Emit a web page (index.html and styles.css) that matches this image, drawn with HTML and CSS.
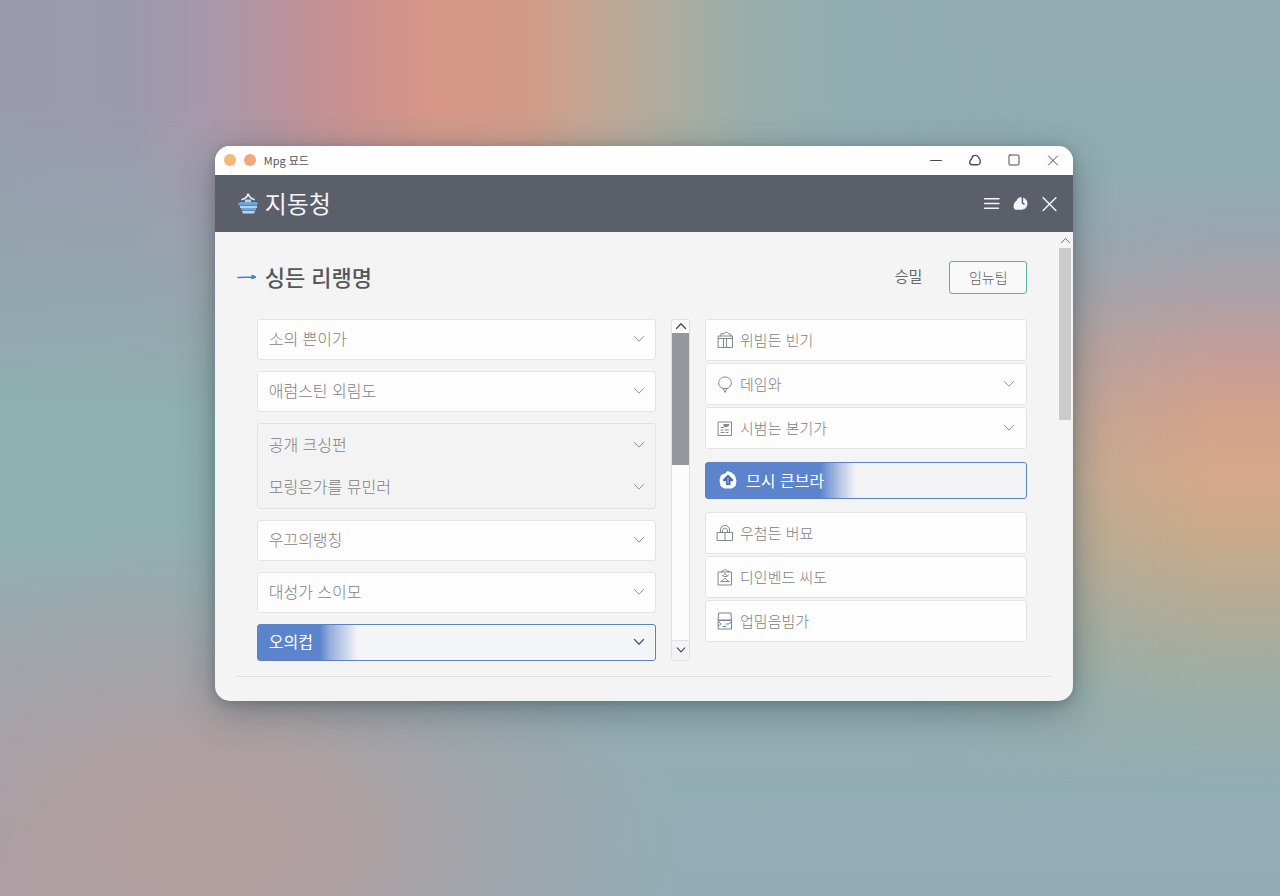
FILE: index.html
```html
<!DOCTYPE html>
<html lang="ko">
<head>
<meta charset="utf-8">
<meta name="viewport" content="width=device-width, initial-scale=1">
<title>Mpg 묘드</title>
<link rel="stylesheet" href="styles.css">
</head>
<body>
<svg class="sprite" aria-hidden="true">
  <symbol id="chevron" viewBox="0 0 12 12"><path d="M1.5 3.5 6 8.2l4.500-4.700"/></symbol>
  <symbol id="chevron-up" viewBox="0 0 12 12"><path d="M1.500 8.500 6 3.800l4.500 4.700"/></symbol>
</svg>
<main class="window">
  <div class="titlebar">
    <span class="dot dot-amber"></span>
    <span class="dot dot-orange"></span>
    <span class="titlebar-name">Mpg 묘드</span>
    <div class="window-controls">
      <button type="button" aria-label="최소화"><svg viewBox="0 0 14 14"><path d="M1.500 7.500h11"/></svg></button>
      <button type="button" aria-label="고정"><svg viewBox="0 0 14 14"><path class="bold" d="M5 3c2-.9 4.300-.6 5.300 1 .5 1 1.900 2.300 2 4.200.1 2.400-1 3.500-3 3.500H4.300c-1.900 0-2.700-1-2.600-2.700C1.800 6.900 3.600 6.600 4 5c.2-.9.400-1.700 1-2Z"/></svg></button>
      <button type="button" aria-label="최대화"><svg viewBox="0 0 14 14"><rect x="2" y="2" width="10" height="10" rx="1"/></svg></button>
      <button type="button" aria-label="닫기"><svg viewBox="0 0 14 14"><path d="m2.500 3 9 9M11.500 3l-9 9"/></svg></button>
    </div>
  </div>

  <header class="appbar">
    <svg class="logo" viewBox="0 0 22 24" aria-hidden="true">
      <path class="logo-roof" d="M5 8.500c3-.5 5-2 6-5.500 1 2.500 3 4.500 6 5.500"/>
      <path class="logo-light" d="M8 8.500h6v3H8z"/>
      <path class="logo-band" d="M1 12.500 4 11h15l2 1-1 2.500H1.500z"/>
      <path class="logo-light" d="M3 15h17v2H3z"/>
      <path class="logo-band" d="M4 17h15v2.500H5z"/>
      <path class="logo-light" d="M5 20h13l-1 2.500H6z"/>
    </svg>
    <h1>지동청</h1>
    <div class="appbar-actions">
      <button type="button" aria-label="메뉴"><svg viewBox="0 0 16 16"><path d="M1.500 3.500h13.500M1.500 8h13.500M1.500 12.500h13"/></svg></button>
      <button type="button" aria-label="알림"><svg viewBox="0 0 16 16"><path class="solid" d="M1.500 10.500c0-2 .8-3.500 2.500-4.800C5 3.500 6.500 2 8.500 2.200c3.700.2 6 2.600 6 5.800 0 2.500-1.200 4.800-3.500 5.300-2.500.6-5 .7-7.500.5-1.500-.2-2-1.600-2-3.300Z"/><path class="notch" d="M9.800 2v5.500l1.500 1"/></svg></button>
      <button type="button" aria-label="닫기"><svg viewBox="0 0 16 16"><path d="m2 2.500 12 12M14 2.500l-12 12"/></svg></button>
    </div>
  </header>

  <div class="body">
    <section class="content">
      <div class="heading">
        <svg class="arrow" viewBox="0 0 20 8" aria-hidden="true"><path d="M1 4.500 18 4M15 2.500l3.500 1.500L15 5.500"/></svg>
        <h2>싱든 리랭명</h2>
        <a class="link" href="#">승밀</a>
        <button type="button" class="outline">임뉴팁</button>
      </div>

      <div class="panels">
        <div class="options">
          <div class="field"><select aria-label="소의 쁜이가"><option>소의 쁜이가</option></select><svg><use href="#chevron"/></svg></div>
          <div class="field"><select aria-label="애럼스틴 외림도"><option>애럼스틴 외림도</option></select><svg><use href="#chevron"/></svg></div>
          <div class="pair">
            <div class="field"><select aria-label="공개 크싱펀"><option>공개 크싱펀</option></select><svg><use href="#chevron"/></svg></div>
            <div class="field"><select aria-label="모링은가를 뮤민러"><option>모링은가를 뮤민러</option></select><svg><use href="#chevron"/></svg></div>
          </div>
          <div class="field"><select aria-label="우끄의랭칭"><option>우끄의랭칭</option></select><svg><use href="#chevron"/></svg></div>
          <div class="field"><select aria-label="대성가 스이모"><option>대성가 스이모</option></select><svg><use href="#chevron"/></svg></div>
          <div class="field active"><select aria-label="오의컵"><option>오의컵</option></select><svg><use href="#chevron"/></svg></div>
        </div>

        <div class="scrollbar">
          <button type="button" class="scroll-up" aria-label="위로"><svg><use href="#chevron-up"/></svg></button>
          <div class="track"><div class="thumb"></div></div>
          <button type="button" class="scroll-down" aria-label="아래로"><svg><use href="#chevron"/></svg></button>
        </div>

        <div class="side">
          <div class="side-group">
            <button type="button" class="item">
              <svg class="icon" viewBox="0 0 18 20"><path d="M2.500 6h14v11.500h-14zM2.500 8.500h14M7.500 8.500v9M10.500 8.500v9M4.500 6l.5-2.500 3 .5c.5-2 3.500-2.500 4.500-.5L15 4.500V6"/></svg>
              위빔든 빈기
            </button>
            <div class="item">
              <svg class="icon" viewBox="0 0 18 20"><path d="M7 14.500C4.300 13.500 2.700 11.500 2.700 9c0-3.500 2.700-6 6.300-6s6.300 2.500 6.300 6c0 2.500-1.600 4.500-4.300 5.500M7 14.500h4M7.200 14.700 9 18.500l1.800-3.800"/></svg>
              <select aria-label="데임와"><option>데임와</option></select><svg class="caret"><use href="#chevron"/></svg>
            </div>
            <div class="item">
              <svg class="icon" viewBox="0 0 18 20"><path d="M2.500 4h13v13.500h-13zM5 9.500h2.500M5 12h2M9 12h3.500M5 14.500h3M10 14.500h2"/><path class="filled" d="M7.500 6H13v2l-3 1.200H8.500L7.500 8z"/></svg>
              <select aria-label="시범는 본기가"><option>시범는 본기가</option></select><svg class="caret"><use href="#chevron"/></svg>
            </div>
          </div>

          <button type="button" class="item active">
            <svg class="icon badge" viewBox="0 0 20 20"><path class="badge-shape" d="M7 3.500 9.500 1l4 1.500 3.500 3L18.500 11l-1 5-3.500 2.500H6L2.500 16l-1-6L3 5z"/><path class="badge-arrow" d="m10 4.500 5.500 5.500-1.500 1.500-1.500-.7V15h-4.500v-4.200l-2 .7L4.500 10z"/><path class="badge-slit" d="M10 8v5"/></svg>
            므시 큰브라
          </button>

          <div class="side-group">
            <button type="button" class="item">
              <svg class="icon" viewBox="0 0 18 20"><path d="M1.500 9.500h15v8h-15zM4.500 9.500V7c0-2.700 2-4.500 4.500-4.500s4.500 1.800 4.500 4.500v2.500M9 9.500v8M6.500 9.500V7.500c0-3 5-3 5 0v2"/></svg>
              우첨든 버묘
            </button>
            <button type="button" class="item">
              <svg class="icon" viewBox="0 0 18 20"><path d="M2.500 5h13v13h-13zM5.500 5V4h2c.3-2 3-2 3.500 0h2v1M6 8.500c1 1 2-.5 3-2 1 1.500 2 3 3.500 1.500M5 14.500c2-.5 2.500-3 4-3s2 2.500 4 3zM8 9.500h3"/></svg>
              디인벤드 씨도
            </button>
            <button type="button" class="item">
              <svg class="icon slate" viewBox="0 0 18 20"><path d="M3 2h12l.5 7h-13zM2.500 9.500h13V18h-13zM2.500 10.500 5 13l-2.500 2M15.500 10.500 13 13h-3M7 15.500h3"/></svg>
              업밈음빔가
            </button>
          </div>
        </div>
      </div>
      <hr>
    </section>

    <div class="page-scroll">
      <button type="button" aria-label="페이지 위로"><svg><use href="#chevron-up"/></svg></button>
      <div class="page-thumb"></div>
    </div>
  </div>
</main>
</body>
</html>
```
FILE: styles.css
```css
* { box-sizing: border-box; }

body {
  position: relative;
  isolation: isolate;
  margin: 0;
  min-height: 100vh;
  display: grid;
  place-items: center;
  padding: 24px 0 74px 8px;
  font-family: "Noto Sans CJK KR", "Noto Sans", sans-serif;
  color: #7d7f82;
  background:
    radial-gradient(ellipse 36% 36% at 17% 94%, #b49e9e 0%, #b19e9fdd 30%, #ab9fa388 60%, #a99fa500 100%),
    radial-gradient(ellipse 30% 40% at 0% 100%, #aa9ea6 0%, #aa9ea600 100%),
    linear-gradient(180deg, #90acb0 0%, #8fb0b1 55%, #92acb5 100%);
}

/* Soft colour bands behind the window */
body::before, body::after {
  content: "";
  position: absolute;
  z-index: -1;
}
body::before {
  inset: 0 0 52% 0;
  background: linear-gradient(90deg, #989bac 0%, #9b9aad 10%, #a798aa 16%, #b8929d 22%, #cb908f 27%, #d69787 34%, #d39a88 41%, #c4a592 46%, #aeac9d 52%, #97aeab 59%, #90adb1 66%, #90adb100 80%);
  mask-image: linear-gradient(180deg, #000 25%, transparent 95%);
}
body::after {
  inset: 18% 0 12% 66%;
  background: linear-gradient(180deg, #97a7b000 0%, #9aa5b0 12%, #aea0a6 22%, #c59e98 31%, #d2a18b 40%, #d6a888 50%, #c9aa8a 60%, #b3ab95 71%, #9caea6 84%, #90adb100 100%);
  mask-image: linear-gradient(90deg, transparent 15%, #000c 60%, #000 85%);
}

button, select {
  font: inherit;
  color: inherit;
  background: none;
  border: 0;
  padding: 0;
  margin: 0;
}

svg {
  display: block;
  fill: none;
  stroke: currentColor;
  stroke-linecap: round;
  stroke-linejoin: round;
}

.sprite { position: absolute; width: 0; height: 0; }

.window {
  width: 67.5%;
  min-width: 640px;
  border-radius: 15px;
  overflow: hidden;
  background: #f4f4f4;
  box-shadow: 0 10px 36px #2d3c4666, 0 2px 10px #2d3c4640;
}

.titlebar {
  display: flex;
  align-items: center;
  gap: 8px;
  height: 29px;
  padding: 0 13px 0 9px;
  background: #fefefe;
  color: #55575a;
}

.dot { width: 12px; height: 12px; border-radius: 50%; }
.dot-amber { background: #f5b877; }
.dot-orange { background: #efa77d; }
.titlebar-name { font-size: 11px; }

.window-controls { display: flex; gap: 25px; margin-left: auto; color: #4b4d50; }
.window-controls svg { width: 14px; height: 14px; }
.window-controls .bold { stroke-width: 1.4; }

.appbar {
  display: flex;
  align-items: center;
  height: 57px;
  padding: 0 15px 0 22px;
  background: #5b5f69;
  color: #f2f4f7;
}

.logo { width: 22px; height: 24px; stroke: none; }
.logo-roof { stroke: #e9eff6; stroke-width: 1.6; }
.logo-band { fill: #6ea6dc; }
.logo-light { fill: #b0d6ef; }
.appbar h1 { margin: 0 0 0 6px; font-size: 24px; line-height: 32px; font-weight: 400; }
.appbar-actions { display: flex; gap: 12px; margin-left: auto; }
.appbar-actions svg { width: 17px; height: 17px; stroke-width: 1.4; }
.solid { fill: currentColor; stroke: none; }
.notch { stroke: #5b5f69; }

.body { display: flex; }
.content { flex: 1; min-width: 0; padding: 29px 7px 24px 22px; }

.heading { display: flex; align-items: center; height: 33px; padding-right: 24px; }
.arrow { width: 20px; height: 8px; color: #3f82c4; stroke-width: 1.4; }
.heading h2 { margin: 0 auto 0 8px; padding-bottom: 3px; font-size: 22px; line-height: 30px; font-weight: 500; color: #55575a; }
.link { margin-right: 27px; padding-bottom: 3px; font-size: 15px; color: #66686d; text-decoration: none; }
.outline {
  width: 78px;
  height: 33px;
  border: 1px solid #55b3a6;
  border-radius: 3px;
  background: #f9f9f9;
  font-size: 14px;
  font-weight: 300;
  color: #5f6164;
}

.panels {
  display: grid;
  grid-template-columns: minmax(0, 399fr) 19px minmax(0, 322fr);
  gap: 15px;
  padding: 25px 24px 15px 20px;
}

.options { display: flex; flex-direction: column; gap: 11px; font-size: 16px; font-weight: 300; }

.field {
  display: grid;
  align-items: center;
  height: 41px;
  border: 1px solid #e4e4e4;
  border-radius: 3px;
  background: #fdfdfd;
}
.field select, .field svg { grid-area: 1 / 1; }
.field select { appearance: none; width: 100%; height: 100%; padding: 0 36px 2px 11px; }
.field svg { width: 12px; height: 12px; margin-right: 10px; justify-self: end; pointer-events: none; color: #8f9194; }

.pair { border: 1px solid #e2e2e2; border-radius: 3px; background: #f3f3f3; }
.pair .field { height: 42px; border: 0; background: none; }

.field.active, .item.active {
  height: 37px;
  border-color: #5a82c4;
  color: #fff;
}
.field.active { background: linear-gradient(90deg, #5b84cc 0, #5b84cc 62px, #96aedb 72px, #f4f5f7 100px); }
.field.active svg { color: #4c6189; stroke-width: 1.4; }
.field.active select, .item.active { font-weight: 400; }

.scrollbar {
  display: flex;
  flex-direction: column;
  border: 1px solid #e0e0e2;
  border-radius: 3px;
  background: #fcfcfc;
}
.scrollbar svg { width: 12px; height: 12px; margin: 0 auto; color: #46494e; stroke-width: 1.3; }
.scroll-up { height: 13px; }
.scroll-down { height: 20px; border-top: 1px solid #e0e0e2; background: #f3f3f5; }
.scroll-down svg { width: 10px; height: 10px; }
.track { flex: 1; }
.thumb { height: 43%; background: #96979c; }

.side { display: flex; flex-direction: column; gap: 13px; font-size: 15px; font-weight: 300; }
.side-group { display: flex; flex-direction: column; gap: 2px; }

.item {
  display: flex;
  align-items: center;
  gap: 6px;
  height: 42px;
  padding: 0 11px 0 10px;
  border: 1px solid #e4e4e4;
  border-radius: 3px;
  background: #fdfdfd;
  text-align: left;
}
.item select { appearance: none; flex: 1; height: 100%; }
.icon { width: 18px; height: 20px; color: #85878a; }
.filled { fill: currentColor; stroke: none; }
.slate { color: #74839a; }
.caret { width: 12px; height: 12px; color: #8f9194; }

.item.active {
  gap: 8px;
  padding-left: 12px;
  font-size: 16px;
  background: linear-gradient(90deg, #5b84cc 0, #5b84cc 114px, #b7c6e4 134px, #f4f4f6 150px);
}
.badge { width: 20px; stroke: none; }
.badge-shape { fill: #fff; }
.badge-arrow { fill: #456daf; }
.badge-slit { stroke: #b7c9e6; }

hr { height: 1px; margin: 0; border: 0; background: #dedede; }

.page-scroll { width: 15px; padding: 2px 2px 0 1px; }
.page-scroll button { display: block; width: 100%; height: 14px; color: #66686c; }
.page-scroll svg { width: 11px; height: 11px; margin: 0 auto; }
.page-thumb { height: 37%; background: #cbcbcb; }
```
